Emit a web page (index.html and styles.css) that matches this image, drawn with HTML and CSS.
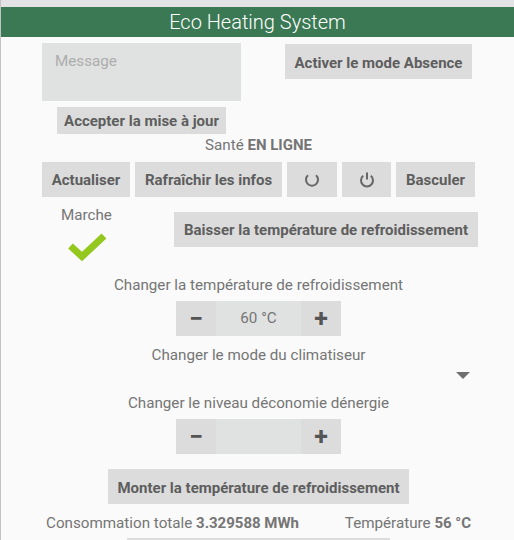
FILE: index.html
```html
<!DOCTYPE html>
<html>
<head>
    <link rel="stylesheet" href="styles.css">
    <title>Eco Heating System</title>
</head>
<body>
    <div class="topband"></div>
    <h1 class="header">Eco Heating System</h1>

    <div class="row message_row">
        <div class="message_col">
            <div class="message">Message</div>
            <button class="btn accept">Accepter la mise à jour</button>
        </div>
        <button class="btn absence">Activer le mode Absence</button>
    </div>

    <div class="health">Santé <b>EN LIGNE</b></div>

    <div class="row actions">
        <button class="btn act_refresh">Actualiser</button>
        <button class="btn act_info">Rafraîchir les infos</button>
        <button class="btn act_icon">
            <svg width="16" height="16" viewBox="0 0 16 16"><path d="M4 3.2A6 6 0 1 0 12 3.2" fill="none" stroke="#666" stroke-width="2"/></svg>
        </button>
        <button class="btn act_icon">
            <svg width="16" height="18" viewBox="0 0 16 18"><path d="M4.2 4.8A6 6 0 1 0 11.8 4.8M8 1.5V8.6" fill="none" stroke="#666" stroke-width="2"/></svg>
        </button>
        <button class="btn act_toggle">Basculer</button>
    </div>

    <div class="row status_row">
        <div class="status">
            <div>Marche</div>
            <svg class="check" width="40" height="32" viewBox="0 0 40 32"><path d="M3.5 14L15 24.5L37 4" fill="none" stroke="#94c81e" stroke-width="7"/></svg>
        </div>
        <button class="btn lower">Baisser la température de refroidissement</button>
    </div>

    <div class="label label_temp">Changer la température de refroidissement</div>
    <div class="stepper">
        <button class="step">&#8722;</button>
        <div class="step_value">60 °C</div>
        <button class="step">+</button>
    </div>

    <div class="label label_mode">Changer le mode du climatiseur</div>
    <div class="select_row"><span class="arrow"></span></div>

    <div class="label label_eco">Changer le niveau déconomie dénergie</div>
    <div class="stepper">
        <button class="step">&#8722;</button>
        <div class="step_value"></div>
        <button class="step">+</button>
    </div>

    <div class="raise_row"><button class="btn raise">Monter la température de refroidissement</button></div>

    <div class="row totals">
        <div>Consommation totale <b>3.329588 MWh</b></div>
        <div>Température <b>56 °C</b></div>
    </div>
    <div class="last_btn"></div>
</body>
</html>
```

FILE: styles.css
```css
html
{
    height:540px;
    overflow:hidden;
}
body
{
    margin:0;
    height:540px;
    overflow:hidden;
    background-color:#fafafa;
    border-left:1px solid #c4c4c4;
    color:#757575;
    font-family:Roboto, sans-serif;
    font-size:15.2px;
}
b
{
    font-size:15px;
    font-weight:700;
}
.topband
{
    height:7px;
    background-color:#e3e3e5;
}
.header
{
    margin:0;
    height:30px;
    line-height:30px;
    background-color:#3b7854;
    color:white;
    font-size:20px;
    font-weight:300;
    text-align:center;
}
.row
{
    display:flex;
}
.btn
{
    height:35px;
    padding:1px 0 0 0;
    border:none;
    border-radius:0;
    background-color:#dcdcdc;
    color:#5e5e5e;
    font-family:Roboto, sans-serif;
    font-size:15px;
    font-weight:700;
}
.message_row
{
    padding:6px 0 0 41px;
}
.message_col
{
    width:199px;
}
.message
{
    height:58px;
    box-sizing:border-box;
    padding:9px 13px;
    background-color:#e0e1e1;
    color:#adadad;
}
.accept
{
    display:block;
    width:169px;
    height:27px;
    margin:6px 0 0 15px;
}
.absence
{
    width:187px;
    margin:1px 0 0 44px;
    padding-top:3px;
}
.health
{
    height:28px;
    line-height:22px;
    padding-left:204px;
}
.actions
{
    gap:5px;
    padding-left:41px;
}
.act_refresh
{
    width:88px;
}
.act_info
{
    width:147px;
}
.act_icon
{
    width:50px;
    display:flex;
    align-items:center;
    justify-content:center;
}
.act_icon + .act_icon
{
    width:49px;
}
.act_toggle
{
    width:79px;
}
.status_row
{
    height:35px;
    margin-top:15px;
}
.status
{
    width:173px;
    margin-top:-5px;
    padding-left:60px;
    box-sizing:border-box;
    line-height:17px;
}
.check
{
    display:block;
    margin:8px 0 0 6px;
}
.lower
{
    width:304px;
}
.label
{
    text-align:center;
    padding-left:2px;
}
.label_temp
{
    padding-top:28px;
    line-height:20px;
}
.stepper
{
    display:flex;
    width:165px;
    height:35px;
    margin:6px 0 0 175px;
}
.step
{
    width:40px;
    padding:0;
    border:none;
    background-color:#dcdcdc;
    color:#555;
    font-family:Roboto, sans-serif;
    font-size:25px;
    font-weight:700;
    line-height:35px;
}
.step_value
{
    flex:1;
    line-height:35px;
    text-align:center;
    background-color:#e0e1e1;
}
.label_mode
{
    margin-top:9px;
    line-height:20px;
}
.select_row
{
    display:flex;
    justify-content:flex-end;
    height:28px;
    padding:7px 44px 0 0;
    box-sizing:border-box;
}
.arrow
{
    width:0;
    height:0;
    border-left:7px solid transparent;
    border-right:7px solid transparent;
    border-top:7px solid #6f6f6f;
}
.label_eco
{
    line-height:20px;
}
.raise_row
{
    padding:15px 0 0 107px;
}
.raise
{
    display:block;
    width:301px;
    padding-top:3px;
}
.totals
{
    justify-content:space-between;
    padding:9px 43px 0 45px;
    line-height:20px;
}
.last_btn
{
    width:263px;
    height:10px;
    margin:5px 0 0 126px;
    background-color:#dcdcdc;
}
```
